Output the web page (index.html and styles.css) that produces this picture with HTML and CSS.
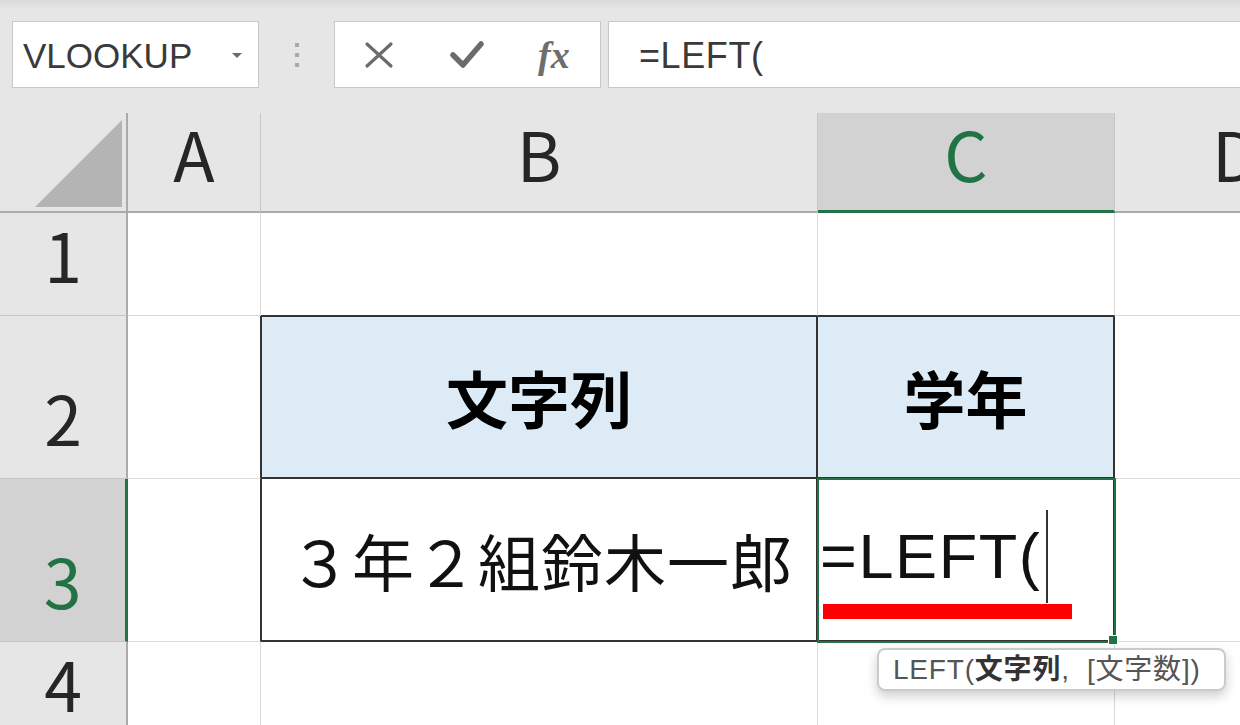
FILE: index.html
```html
<!DOCTYPE html>
<html lang="ja">
<head>
  <meta charset="UTF-8" />
  <title>LEFT関数</title>
  <link rel="stylesheet" href="styles.css">
</head>
<body>
  <div class="toolbar">
    <div class="name-box">
      <span>VLOOKUP</span>
      <span class="caret"></span>
    </div>
    <div class="grip"><span></span><span></span><span></span></div>
    <div class="fx-box">
      <span class="fx-btn">
        <svg width="30" height="28" viewBox="0 0 30 28">
          <path d="M3 3 L27 25 M27 3 L3 25" fill="none" stroke="#6b6b6b" stroke-width="3.2" stroke-linecap="round"/>
        </svg>
      </span>
      <span class="fx-btn">
        <svg width="34" height="30" viewBox="0 0 34 30">
          <path d="M3 15 L13 25 L31 4" fill="none" stroke="#6b6b6b" stroke-width="5.5" stroke-linecap="round" stroke-linejoin="round"/>
        </svg>
      </span>
      <span class="fx-btn fx-label">fx</span>
    </div>
    <div class="formula-bar">=LEFT(</div>
  </div>

  <div class="sheet">
    <!-- column headers -->
    <div class="corner"><span class="corner-tri"></span></div>
    <div class="col-head">A</div>
    <div class="col-head">B</div>
    <div class="col-head active">C</div>
    <div class="col-head">D</div>

    <!-- row 1 -->
    <div class="row-head">1</div>
    <div class="cell"></div>
    <div class="cell top-edge"></div>
    <div class="cell top-edge"></div>
    <div class="cell"></div>

    <!-- row 2 -->
    <div class="row-head">2</div>
    <div class="cell left-edge"></div>
    <div class="cell tbl th first-col first-row">文字列</div>
    <div class="cell tbl th first-row">学年</div>
    <div class="cell"></div>

    <!-- row 3 -->
    <div class="row-head active">3</div>
    <div class="cell left-edge"></div>
    <div class="cell tbl name first-col">３年２組鈴木一郎</div>
    <div class="cell tbl editing">
      <span>=LEFT(</span>
      <span class="cursor"></span>
      <span class="mark"></span>
      <div class="tip">LEFT(<b>文字列</b>,&nbsp; [文字数])</div>
    </div>
    <div class="cell"></div>

    <!-- row 4 -->
    <div class="row-head">4</div>
    <div class="cell"></div>
    <div class="cell"></div>
    <div class="cell"></div>
    <div class="cell"></div>
  </div>
</body>
</html>
```

FILE: styles.css
```css
* {
  box-sizing: border-box;
}
body {
  margin: 0;
  height: 725px;
  overflow: hidden;
  background: #e6e6e6;
  font-family: "Liberation Sans", Arial, sans-serif;
}

/* formula bar */
.toolbar {
  display: flex;
  align-items: flex-start;
  height: 113px;
  padding: 21px 0 0 12px;
  background: linear-gradient(#d9d9d9, #e6e6e6 9px);
}
.name-box {
  display: flex;
  align-items: center;
  width: 247px;
  height: 67px;
  padding: 2px 16px 0 10px;
  background: #fff;
  border: 1px solid #c8c8c8;
  font-size: 35px;
  color: #3a3a3a;
}
.caret {
  margin-left: auto;
  border-left: 5px solid transparent;
  border-right: 5px solid transparent;
  border-top: 5px solid #6b6b6b;
}
.grip {
  display: flex;
  flex-direction: column;
  align-items: center;
  justify-content: center;
  gap: 6px;
  width: 75px;
  height: 67px;
}
.grip span {
  width: 4px;
  height: 4px;
  background: #a8a8a8;
}
.fx-box {
  display: grid;
  grid-template-columns: repeat(3, 1fr);
  align-items: center;
  justify-items: center;
  width: 267px;
  height: 67px;
  background: #fff;
  border: 1px solid #c8c8c8;
}
.fx-btn {
  display: flex;
}
.fx-label {
  margin-right: 4px;
  font-family: "Liberation Serif", serif;
  font-style: italic;
  font-weight: 700;
  font-size: 38px;
  color: #6e6e6e;
}
.formula-bar {
  flex: 1;
  display: flex;
  align-items: center;
  height: 67px;
  margin: 0 -10px 0 7px;
  padding: 2px 0 0 30px;
  background: #fff;
  border: 1px solid #c8c8c8;
  font-size: 36px;
  letter-spacing: 0.6px;
  color: #3a3a3a;
}

/* sheet */
.sheet {
  display: grid;
  grid-template-columns: 128px 133px 557px 297px 242px;
  grid-template-rows: 100px 103px 163px 163px 103px;
  font-family: "Noto Sans CJK JP", sans-serif;
}
.corner {
  display: flex;
  justify-content: flex-end;
  align-items: flex-end;
  padding: 0 4px 4px 0;
  background: #e6e6e6;
  border-right: 2px solid #ababab;
  border-bottom: 2px solid #ababab;
}
.corner-tri {
  width: 87px;
  height: 87px;
  background: #b4b4b4;
  clip-path: polygon(100% 0, 100% 100%, 0 100%);
}
.col-head,
.row-head {
  display: flex;
  justify-content: center;
  align-items: flex-end;
  background: #e6e6e6;
  font-size: 68px;
  line-height: 1;
  color: #262626;
}
.col-head {
  padding-bottom: 24px;
  border-right: 1px solid #c6c6c6;
  border-bottom: 2px solid #ababab;
}
.col-head.active {
  padding-bottom: 23px;
  background: #d2d2d2;
  color: #217346;
  border-bottom: 3px solid #217346;
}
.row-head {
  padding-bottom: 27px;
  border-right: 2px solid #ababab;
  border-bottom: 1px solid #c6c6c6;
}
.row-head.active {
  background: #d2d2d2;
  color: #217346;
  border-right: 3px solid #217346;
}
.cell {
  background: #fff;
  border-right: 1px solid #dadada;
  border-bottom: 1px solid #dadada;
}
.top-edge {
  border-bottom-color: #333;
}
.left-edge {
  border-right-color: #333;
}
.tbl {
  display: flex;
  align-items: center;
  justify-content: center;
  border-right: 2px solid #333;
  border-bottom: 2px solid #333;
  font-size: 62px;
  line-height: 1;
  color: #000;
}
.first-col {
  border-left: 1px solid #333;
}
.first-row {
  border-top: 1px solid #333;
}
.th {
  background: #ddebf7;
  font-weight: 700;
}
.name {
  padding-left: 4px;
  letter-spacing: 1px;
  color: #111;
}

/* active cell */
.editing {
  position: relative;
  z-index: 1;
  justify-content: flex-start;
  padding: 0 0 6px 2px;
  outline: 2px solid #217346;
  outline-offset: -1px;
  font-family: "Liberation Sans", Arial, sans-serif;
  font-size: 63px;
  letter-spacing: 1.6px;
  color: #111;
}
.editing::after {
  content: "";
  position: absolute;
  right: -5px;
  bottom: -5px;
  width: 8px;
  height: 8px;
  background: #217346;
  border: 1px solid #fff;
}
.cursor {
  position: absolute;
  left: 228px;
  top: 31px;
  width: 2px;
  height: 93px;
  background: #333;
}
.mark {
  position: absolute;
  left: 5px;
  top: 125px;
  width: 249px;
  height: 15px;
  background: #f00;
}
.tip {
  position: absolute;
  left: 59px;
  top: 169px;
  display: flex;
  align-items: center;
  width: 349px;
  height: 43px;
  padding-left: 14px;
  background: #fff;
  border: 2px solid #cbcbcb;
  border-radius: 8px;
  box-shadow: 0 5px 12px rgba(0,0,0,0.2);
  font-family: "Liberation Sans", "Noto Sans CJK JP", sans-serif;
  font-size: 28px;
  letter-spacing: 0.8px;
  line-height: 1;
  color: #555;
  white-space: nowrap;
}
.tip b {
  color: #333;
}
```
